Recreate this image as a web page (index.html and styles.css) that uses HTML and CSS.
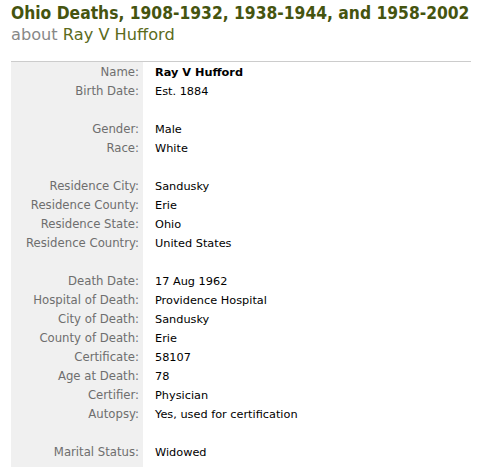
FILE: index.html
```html
<!DOCTYPE html>
<html>
<head>
<meta charset="utf-8">
<link rel="stylesheet" href="styles.css">
</head>
<body>
<div class="page">
  <h1 class="title">Ohio Deaths, 1908-1932, 1938-1944, and 1958-2002</h1>
  <div class="subtitle"><span class="about">about</span> Ray V Hufford</div>
  <div class="record">
    <div class="label">Name:</div><div class="value strong">Ray V Hufford</div>
    <div class="label">Birth Date:</div><div class="value">Est. 1884</div>
    <div class="label"></div><div class="value"></div>
    <div class="label">Gender:</div><div class="value">Male</div>
    <div class="label">Race:</div><div class="value">White</div>
    <div class="label"></div><div class="value"></div>
    <div class="label">Residence City:</div><div class="value">Sandusky</div>
    <div class="label">Residence County:</div><div class="value">Erie</div>
    <div class="label">Residence State:</div><div class="value">Ohio</div>
    <div class="label">Residence Country:</div><div class="value">United States</div>
    <div class="label"></div><div class="value"></div>
    <div class="label">Death Date:</div><div class="value">17 Aug 1962</div>
    <div class="label">Hospital of Death:</div><div class="value">Providence Hospital</div>
    <div class="label">City of Death:</div><div class="value">Sandusky</div>
    <div class="label">County of Death:</div><div class="value">Erie</div>
    <div class="label">Certificate:</div><div class="value">58107</div>
    <div class="label">Age at Death:</div><div class="value">78</div>
    <div class="label">Certifier:</div><div class="value">Physician</div>
    <div class="label">Autopsy:</div><div class="value">Yes, used for certification</div>
    <div class="label"></div><div class="value"></div>
    <div class="label">Marital Status:</div><div class="value">Widowed</div>
    <div class="label"></div><div class="value"></div>
  </div>
</div>
</body>
</html>
```
FILE: styles.css
```css
html, body {
  margin: 0;
  padding: 0;
  background: #fff;
}
.page {
  padding: 2px 0 0 11px;
  width: 460px;
}
.title {
  margin: 0;
  font-family: "DejaVu Sans Condensed", "DejaVu Sans", sans-serif;
  font-weight: bold;
  font-size: 17.3px;
  line-height: 22px;
  color: #45540f;
  white-space: nowrap;
}
.subtitle {
  font-family: "DejaVu Sans", sans-serif;
  font-size: 16.2px;
  line-height: 22px;
  color: #5b6b1c;
  margin-bottom: 15px;
}
.about {
  color: #888;
}
.record {
  display: grid;
  grid-template-columns: 132px 1fr;
  grid-auto-rows: 19px;
  border-top: 1px solid #cccccc;
  padding-top: 1px;
  background: linear-gradient(to right, #f0f0f0 132px, #fff 132px);
  font-family: "DejaVu Sans", Verdana, sans-serif;
  line-height: 19px;
}
.label {
  background: #f0f0f0;
  color: #6e6e6e;
  font-size: 11.7px;
  text-align: right;
  padding-right: 4px;
  white-space: nowrap;
}
.value {
  color: #000;
  font-size: 11.3px;
  padding-left: 12px;
  white-space: nowrap;
}
.strong {
  font-weight: bold;
}
```
